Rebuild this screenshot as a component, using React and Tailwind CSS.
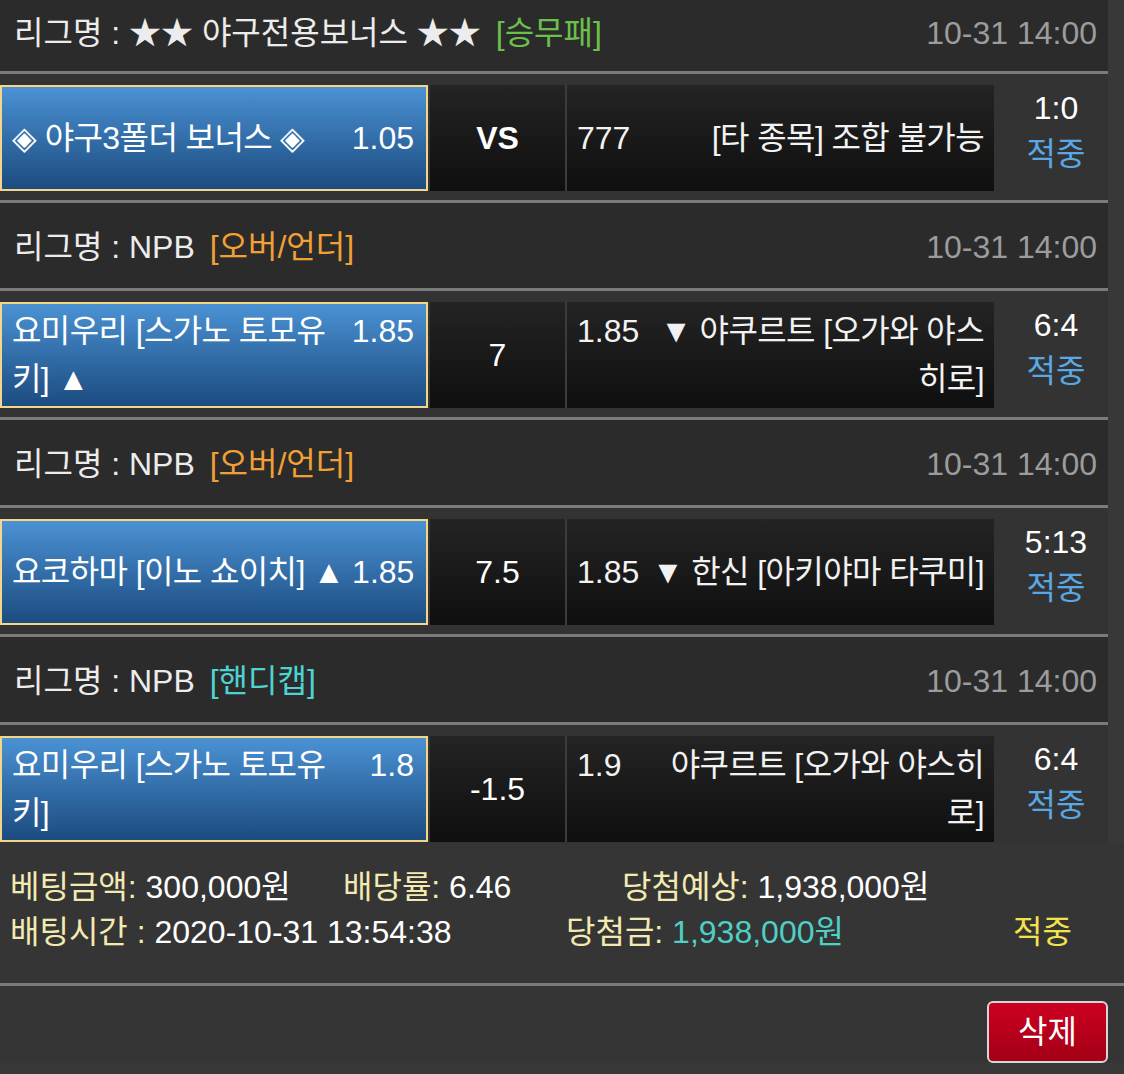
import React from 'react';

const matches = [
  {
    league: '★★ 야구전용보너스 ★★',
    type: '[승무패]',
    typeColor: 'text-[#6cc04a]',
    time: '10-31 14:00',
    home: ['◈ 야구3폴더 보너스 ◈'],
    homeOdds: '1.05',
    mid: 'VS',
    awayOdds: '777',
    away: ['[타 종목] 조합 불가능'],
    score: '1:0',
  },
  {
    league: 'NPB',
    type: '[오버/언더]',
    typeColor: 'text-[#f0a035]',
    time: '10-31 14:00',
    home: ['요미우리 [스가노 토모유', '키] ▲'],
    homeOdds: '1.85',
    mid: '7',
    awayOdds: '1.85',
    away: ['▼ 야쿠르트 [오가와 야스', '히로]'],
    score: '6:4',
  },
  {
    league: 'NPB',
    type: '[오버/언더]',
    typeColor: 'text-[#f0a035]',
    time: '10-31 14:00',
    home: ['요코하마 [이노 쇼이치] ▲'],
    homeOdds: '1.85',
    mid: '7.5',
    awayOdds: '1.85',
    away: ['▼ 한신 [아키야마 타쿠미]'],
    score: '5:13',
  },
  {
    league: 'NPB',
    type: '[핸디캡]',
    typeColor: 'text-[#4fd2d2]',
    time: '10-31 14:00',
    home: ['요미우리 [스가노 토모유', '키]'],
    homeOdds: '1.8',
    mid: '-1.5',
    awayOdds: '1.9',
    away: ['야쿠르트 [오가와 야스히', '로]'],
    score: '6:4',
  },
];

const Line = () => <div className="h-[3px] bg-[#7b7b7b]" />;

const MatchBlock = ({ m, first, last }) => (
  <div>
    {/* league header */}
    <div
      className={`flex items-center justify-between bg-[#2b2b2b] pl-[14px] pr-[11px] ${
        first ? 'h-[71px] pb-[6px]' : 'h-[85px] pt-[3px]'
      }`}
    >
      <div className="whitespace-nowrap text-[#ececec]">
        리그명 : {m.league} <span className={`ml-[6px] ${m.typeColor}`}>{m.type}</span>
      </div>
      <div className="text-[#9c9c9c]">{m.time}</div>
    </div>
    <Line />

    {/* odds row */}
    <div className={`flex bg-[#333333] pt-[11px] ${last ? 'pb-[1px]' : 'pb-[9px]'}`}>
      <div className="flex h-[106px] w-[428px] items-center border-2 border-[#f3d68c] bg-gradient-to-b from-[#4b92d4] to-[#1c4c80] pl-[10px] pr-[12px] text-white">
        <div className="flex w-full items-start justify-between gap-[8px] leading-[48px]">
          <div className="whitespace-nowrap tracking-[-0.6px]">
            {m.home.map((l, i) => (
              <div key={i}>{l}</div>
            ))}
          </div>
          <div>{m.homeOdds}</div>
        </div>
      </div>
      <div className="ml-[2px] flex h-[106px] w-[135px] items-center justify-center bg-gradient-to-b from-[#242424] to-[#0f0f0f] text-white">
        <span className={m.mid === 'VS' ? 'font-bold' : ''}>{m.mid}</span>
      </div>
      <div className="w-[2px] bg-[#3c3c3c]" />
      <div className="flex h-[106px] w-[427px] items-center bg-gradient-to-b from-[#242424] to-[#0f0f0f] pl-[10px] pr-[10px] text-[#f2f2f2]">
        <div className="flex w-full items-start justify-between gap-[8px] leading-[48px]">
          <div>{m.awayOdds}</div>
          <div className="whitespace-nowrap text-right tracking-[-0.6px]">
            {m.away.map((l, i) => (
              <div key={i}>{l}</div>
            ))}
          </div>
        </div>
      </div>
      <div className="flex h-[106px] flex-1 flex-col items-center justify-center pb-[14px] pl-[10px] leading-[46px]">
        <div className="text-white">{m.score}</div>
        <div className="text-[#5aa7e6]">적중</div>
      </div>
    </div>
    {!last && <Line />}
  </div>
);

export default function App() {
  return (
    <div className="h-[1074px] w-[1124px] overflow-hidden bg-[#383838] font-['Liberation_Sans','Noto_Sans_CJK_KR',sans-serif] text-[32px]">
      <div className="w-[1108px]">
        {matches.map((m, i) => (
          <MatchBlock key={i} m={m} first={i === 0} last={i === matches.length - 1} />
        ))}
      </div>

      {/* bet summary */}
      <div className="h-[140px] bg-[#353535] pl-[10px] pt-[22px] leading-[45px]">
        <div className="flex whitespace-nowrap">
          <div className="w-[333px]">
            <span className="text-[#f3eab2]">베팅금액:</span> <span className="text-white">300,000원</span>
          </div>
          <div className="w-[279px]">
            <span className="text-[#f3eab2]">배당률:</span> <span className="text-white">6.46</span>
          </div>
          <div>
            <span className="text-[#f3eab2]">당첨예상:</span> <span className="text-white">1,938,000원</span>
          </div>
        </div>
        <div className="flex whitespace-nowrap">
          <div className="w-[556px]">
            <span className="text-[#f3eab2]">배팅시간 :</span> <span className="text-white">2020-10-31 13:54:38</span>
          </div>
          <div className="w-[447px]">
            <span className="text-[#f3eab2]">당첨금:</span> <span className="text-[#4fcfc6]">1,938,000원</span>
          </div>
          <div className="text-[#f3e24c]">적중</div>
        </div>
      </div>
      <div className="h-[3px] bg-[#7b7b7b]" />

      <div className="flex justify-end bg-[#353535] pr-[16px] pt-[15px]">
        <button className="flex h-[62px] w-[121px] items-center justify-center rounded-md border-2 border-[#d6d6d6] bg-gradient-to-b from-[#cc0020] to-[#a30016] text-white">
          삭제
        </button>
      </div>
    </div>
  );
}
